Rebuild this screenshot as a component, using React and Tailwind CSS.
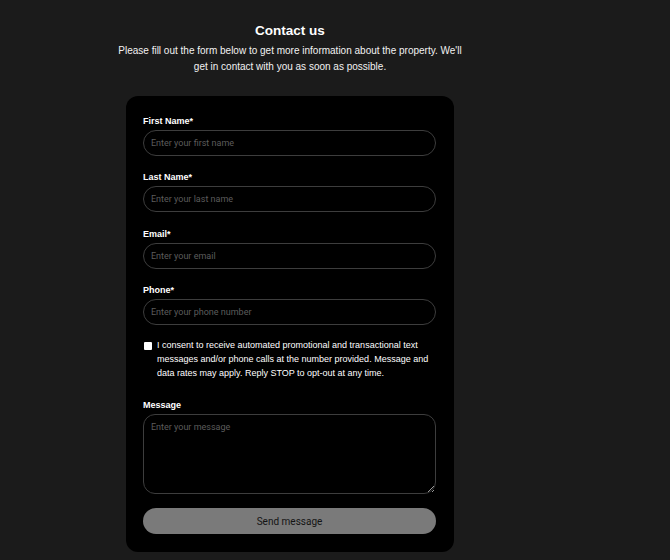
import { useState } from "react";

const fields = [
  { label: "First Name*", placeholder: "Enter your first name", type: "text", gap: "" },
  { label: "Last Name*", placeholder: "Enter your last name", type: "text", gap: "mt-[15px]" },
  { label: "Email*", placeholder: "Enter your email", type: "email", gap: "mt-[16px]" },
  { label: "Phone*", placeholder: "Enter your phone number", type: "tel", gap: "mt-[15px]" },
];

export default function App() {
  const [consent, setConsent] = useState(false);

  return (
    <div className="min-h-screen bg-[#1b1b1b] font-['Liberation_Sans',Arial,sans-serif] text-white">
      <div className="w-[580px] flex flex-col items-center pt-[21px] pb-[9px]">
        <h1 className="text-[13.5px] leading-[20px] font-bold">Contact us</h1>
        <p className="mt-[2px] w-[360px] text-center text-[10px] leading-[16px] text-[#f2f2f2]">
          Please fill out the form below to get more information about the property. We'll get in
          contact with you as soon as possible.
        </p>

        <form
          className="mt-[21px] w-[328px] bg-black rounded-[12px] pl-[17px] pr-[18px] pt-[19px] pb-[18px] flex flex-col"
          onSubmit={(e) => e.preventDefault()}
        >
          {fields.map((f) => (
            <div key={f.label} className={`flex flex-col ${f.gap}`}>
              <label className="text-[9px] leading-[12px] font-bold">{f.label}</label>
              <input
                type={f.type}
                placeholder={f.placeholder}
                className="mt-[3px] h-[26px] w-full rounded-full border border-[#3d3d3d] bg-black px-[7px] text-[9px] text-white font-['Roboto',sans-serif] placeholder:text-[#5c5c5c] outline-none"
              />
            </div>
          ))}

          <label className="mt-[13px] flex items-start gap-[5px] text-[9px] leading-[14px] text-white">
            <input
              type="checkbox"
              checked={consent}
              onChange={(e) => setConsent(e.target.checked)}
              className="mt-[4px] ml-[1px] w-[8px] h-[8px] shrink-0 appearance-none bg-white rounded-[1px]"
            />
            <span>
              I consent to receive automated promotional and transactional text messages and/or phone
              calls at the number provided. Message and data rates may apply. Reply STOP to opt-out at
              any time.
            </span>
          </label>

          <div className="mt-[19px] flex flex-col">
            <label className="text-[9px] leading-[12px] font-bold">Message</label>
            <textarea
              placeholder="Enter your message"
              className="mt-[3px] h-[80px] w-full rounded-[12px] border border-[#3d3d3d] bg-black px-[7px] py-[6px] text-[9px] text-white font-['Roboto',sans-serif] placeholder:text-[#5c5c5c] outline-none"
            />
          </div>

          <button
            type="submit"
            className="mt-[14px] h-[26px] w-full rounded-full bg-[#7a7a7a] text-[10px] text-[#141414] font-['Roboto',sans-serif]"
          >
            Send message
          </button>
        </form>
      </div>
    </div>
  );
}
